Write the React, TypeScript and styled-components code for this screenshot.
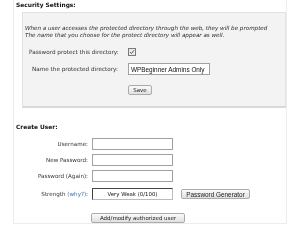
import React from "react";
import styled, { createGlobalStyle } from "styled-components";

const GlobalStyle = createGlobalStyle`
  html, body {
    margin: 0;
    padding: 0;
    background: #ffffff;
  }
  body {
    font-family: "DejaVu Sans", Verdana, sans-serif;
    color: #222;
    -webkit-font-smoothing: antialiased;
  }
`;

const Page = styled.div`
  width: 300px;
  height: 225px;
  overflow: hidden;
  will-change: transform;
`;

const Frame = styled.div`
  margin-left: 13px;
  width: 272px;
  height: 222px;
  border: 1px solid #ececec;
  border-top: none;
  padding-top: 1px;
`;

const Heading = styled.div`
  font-weight: bold;
  font-size: 5.9px;
  line-height: 9px;
  height: 9px;
  padding-left: 2px;
  color: #111;
`;

const Panel = styled.div`
  margin: 2px 0 0 8px;
  height: 96px;
  background: #f3f3f3;
  border: 1px solid #e2e2e2;
  border-bottom: 2px solid #d8d8d8;
  padding: 12px 0 0 2px;
  box-sizing: border-box;
`;

const Note = styled.p`
  margin: 0;
  font-style: italic;
  font-size: 5.6px;
  line-height: 7px;
  color: #2a2a2a;
  white-space: nowrap;
`;

const FieldRow = styled.div<{ $top: number; $indent: number }>`
  display: flex;
  align-items: center;
  margin-top: ${(p) => p.$top}px;
  padding-left: ${(p) => p.$indent}px;
  height: 12px;
`;

const FieldLabel = styled.span<{ $width: number }>`
  width: ${(p) => p.$width}px;
  font-size: 5.7px;
  color: #333;
  white-space: nowrap;
`;

const Check = styled.span`
  width: 6px;
  height: 6px;
  border: 1px solid #7a7a7a;
  background: #e8e8e8;
  display: flex;
  align-items: center;
  justify-content: center;
`;

const TextBox = styled.div<{ $width: number }>`
  width: ${(p) => p.$width}px;
  height: 12px;
  box-sizing: border-box;
  background: #fff;
  border: 1px solid #a0a0a0;
  display: flex;
  align-items: center;
  padding-left: 2px;
  font-family: "Liberation Sans", Arial, sans-serif;
  font-size: 6.4px;
  color: #111;
  white-space: nowrap;
  overflow: hidden;
`;

const StrengthBox = styled(TextBox)`
  justify-content: center;
  padding-left: 0;
  margin-top: 2px;
  font-family: "DejaVu Sans", Verdana, sans-serif;
  font-size: 5.4px;
  border-color: #444 #bbb #bbb #444;
`;

const Button = styled.div<{ $width: number; $arial?: boolean }>`
  width: ${(p) => p.$width}px;
  height: 10px;
  box-sizing: border-box;
  border: 1px solid #aaa;
  border-radius: 2px;
  background: linear-gradient(#fbfbfb, #e0e0e0);
  display: flex;
  align-items: center;
  justify-content: center;
  font-family: ${(p) =>
    p.$arial ? `"Liberation Sans", Arial, sans-serif` : `"DejaVu Sans", Verdana, sans-serif`};
  font-size: ${(p) => (p.$arial ? "6.4px" : "5.5px")};
  color: #222;
  white-space: nowrap;
`;

const SaveRow = styled.div`
  margin-top: 10px;
  padding-left: 103px;
`;

const UserHeading = styled(Heading)`
  margin-top: 15px;
`;

const Form = styled.div`
  display: grid;
  grid-template-columns: 74px 81px auto;
  column-gap: 4px;
  row-gap: 4px;
  margin-top: 6px;
  align-items: center;
`;

const Label = styled.span<{ $shift?: boolean }>`
  text-align: right;
  font-size: 5.6px;
  color: #333;
  white-space: nowrap;
  margin-top: ${(p) => (p.$shift ? "2px" : "0")};
`;

const Why = styled.span`
  color: #3f6fa3;
`;

const Tail = styled.div`
  display: flex;
  padding-left: 4px;
  margin-top: 2px;
`;

const Submit = styled.div`
  margin-top: 13px;
  padding-left: 77px;
`;

const fields = ["Username:", "New Password:", "Password (Again):"];

export default function App() {
  return (
    <Page>
      <GlobalStyle />
      <Frame>
        <Heading>Security Settings:</Heading>
        <Panel>
          <Note>
            When a user accesses the protected directory through the web, they will be prompted
            <br />
            The name that you choose for the protect directory will appear as well.
          </Note>
          <FieldRow $top={7} $indent={4}>
            <FieldLabel $width={99}>Password protect this directory:</FieldLabel>
            <Check>
              <svg width="6" height="6" viewBox="0 0 6 6">
                <path d="M1 3 L2.5 4.6 L5 1.2" fill="none" stroke="#555" strokeWidth="0.9" />
              </svg>
            </Check>
          </FieldRow>
          <FieldRow $top={5} $indent={7}>
            <FieldLabel $width={96}>Name the protected directory:</FieldLabel>
            <TextBox $width={82}>WPBeginner Admins Only</TextBox>
          </FieldRow>
          <SaveRow>
            <Button $width={24}>Save</Button>
          </SaveRow>
        </Panel>
        <UserHeading>Create User:</UserHeading>
        <Form>
          {fields.map((f) => (
            <React.Fragment key={f}>
              <Label>{f}</Label>
              <TextBox $width={81} />
              <span />
            </React.Fragment>
          ))}
          <Label $shift>
            Strength <Why>(why?)</Why>:
          </Label>
          <StrengthBox $width={81}>Very Weak (0/100)</StrengthBox>
          <Tail>
            <Button $width={69} $arial>
              Password Generator
            </Button>
          </Tail>
        </Form>
        <Submit>
          <Button $width={94}>Add/modify authorized user</Button>
        </Submit>
      </Frame>
    </Page>
  );
}
